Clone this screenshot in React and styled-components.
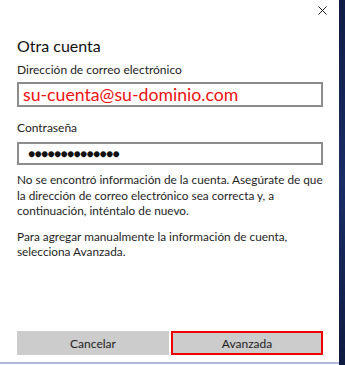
import styled, { createGlobalStyle } from "styled-components";

const GlobalStyle = createGlobalStyle`
  html, body {
    margin: 0;
    padding: 0;
    background: #ffffff;
  }
  body {
    font-family: Lato, "Noto Sans", sans-serif;
  }
`;

const Screen = styled.div`
  display: flex;
  width: 345px;
  height: 365px;
  overflow: hidden;
`;

const Dialog = styled.div`
  width: 339px;
  height: 364px;
  box-sizing: border-box;
  background: #ffffff;
  border-bottom: 2px solid #b3b8df;
  display: flex;
  flex-direction: column;
  padding: 0 16px 0 17px;
`;

const Desktop = styled.div`
  flex: 1;
  background: linear-gradient(180deg, #101c46 0%, #1a2d66 50%, #0f1a40 100%);
`;

const TopBar = styled.div`
  display: flex;
  justify-content: flex-end;
  height: 34px;
  padding-top: 3px;
  box-sizing: border-box;
`;

const CloseButton = styled.button`
  border: none;
  background: none;
  padding: 0;
  margin-right: -6px;
  width: 14px;
  height: 14px;
  display: flex;
  align-items: center;
  justify-content: center;
  cursor: pointer;
`;

const Title = styled.h1`
  margin: 0;
  font-size: 16px;
  font-weight: 400;
  color: #111;
  line-height: 24px;
`;

const Label = styled.div`
  font-size: 12px;
  color: #222;
  line-height: 16px;
  margin-top: ${(p) => p.$top}px;
`;

const Field = styled.div`
  margin-top: ${(p) => p.$gap}px;
  height: ${(p) => p.$height}px;
  box-sizing: border-box;
  border: 2px solid #8c8c8c;
  display: flex;
  align-items: center;
  padding-left: ${(p) => p.$pad}px;
  color: ${(p) => p.$color};
  font-size: ${(p) => p.$size}px;
  letter-spacing: ${(p) => p.$spacing || 0}px;
`;

const Message = styled.p`
  margin: ${(p) => p.$top}px 0 0;
  font-size: 11.8px;
  line-height: 15.6px;
  color: #1e1e1e;
`;

const Spacer = styled.div`
  flex: 1;
`;

const Buttons = styled.div`
  display: grid;
  grid-template-columns: 1fr 1fr;
  gap: 2px;
  margin-bottom: 7px;
`;

const Button = styled.button`
  height: 24px;
  box-sizing: border-box;
  background: #cccccc;
  border: 2px solid ${(p) => (p.$highlight ? "#ee0000" : "#cccccc")};
  font-family: inherit;
  font-size: 12px;
  color: #222;
  padding: 0;
`;

export default function App() {
  return (
    <>
      <GlobalStyle />
      <Screen>
        <Dialog>
          <TopBar>
            <CloseButton aria-label="Cerrar">
              <svg width="9" height="9" viewBox="0 0 9 9">
                <path d="M0.5 0.5 L8.5 8.5 M8.5 0.5 L0.5 8.5" stroke="#222" strokeWidth="1" />
              </svg>
            </CloseButton>
          </TopBar>
          <Title>Otra cuenta</Title>
          <Label $top={4}>Dirección de correo electrónico</Label>
          <Field $gap={4} $height={25} $pad={4} $color="#ee1111" $size={17.7}>
            su-cuenta@su-dominio.com
          </Field>
          <Label $top={13}>Contraseña</Label>
          <Field $gap={6} $height={23} $pad={9} $color="#111" $size={12} $spacing={-0.7}>
            ●●●●●●●●●●●●●●
          </Field>
          <Message $top={7}>
            No se encontró información de la cuenta. Asegúrate de que la
            dirección de correo electrónico sea correcta y, a continuación,
            inténtalo de nuevo.
          </Message>
          <Message $top={10}>
            Para agregar manualmente la información de cuenta, selecciona
            Avanzada.
          </Message>
          <Spacer />
          <Buttons>
            <Button>Cancelar</Button>
            <Button $highlight>Avanzada</Button>
          </Buttons>
        </Dialog>
        <Desktop />
      </Screen>
    </>
  );
}
